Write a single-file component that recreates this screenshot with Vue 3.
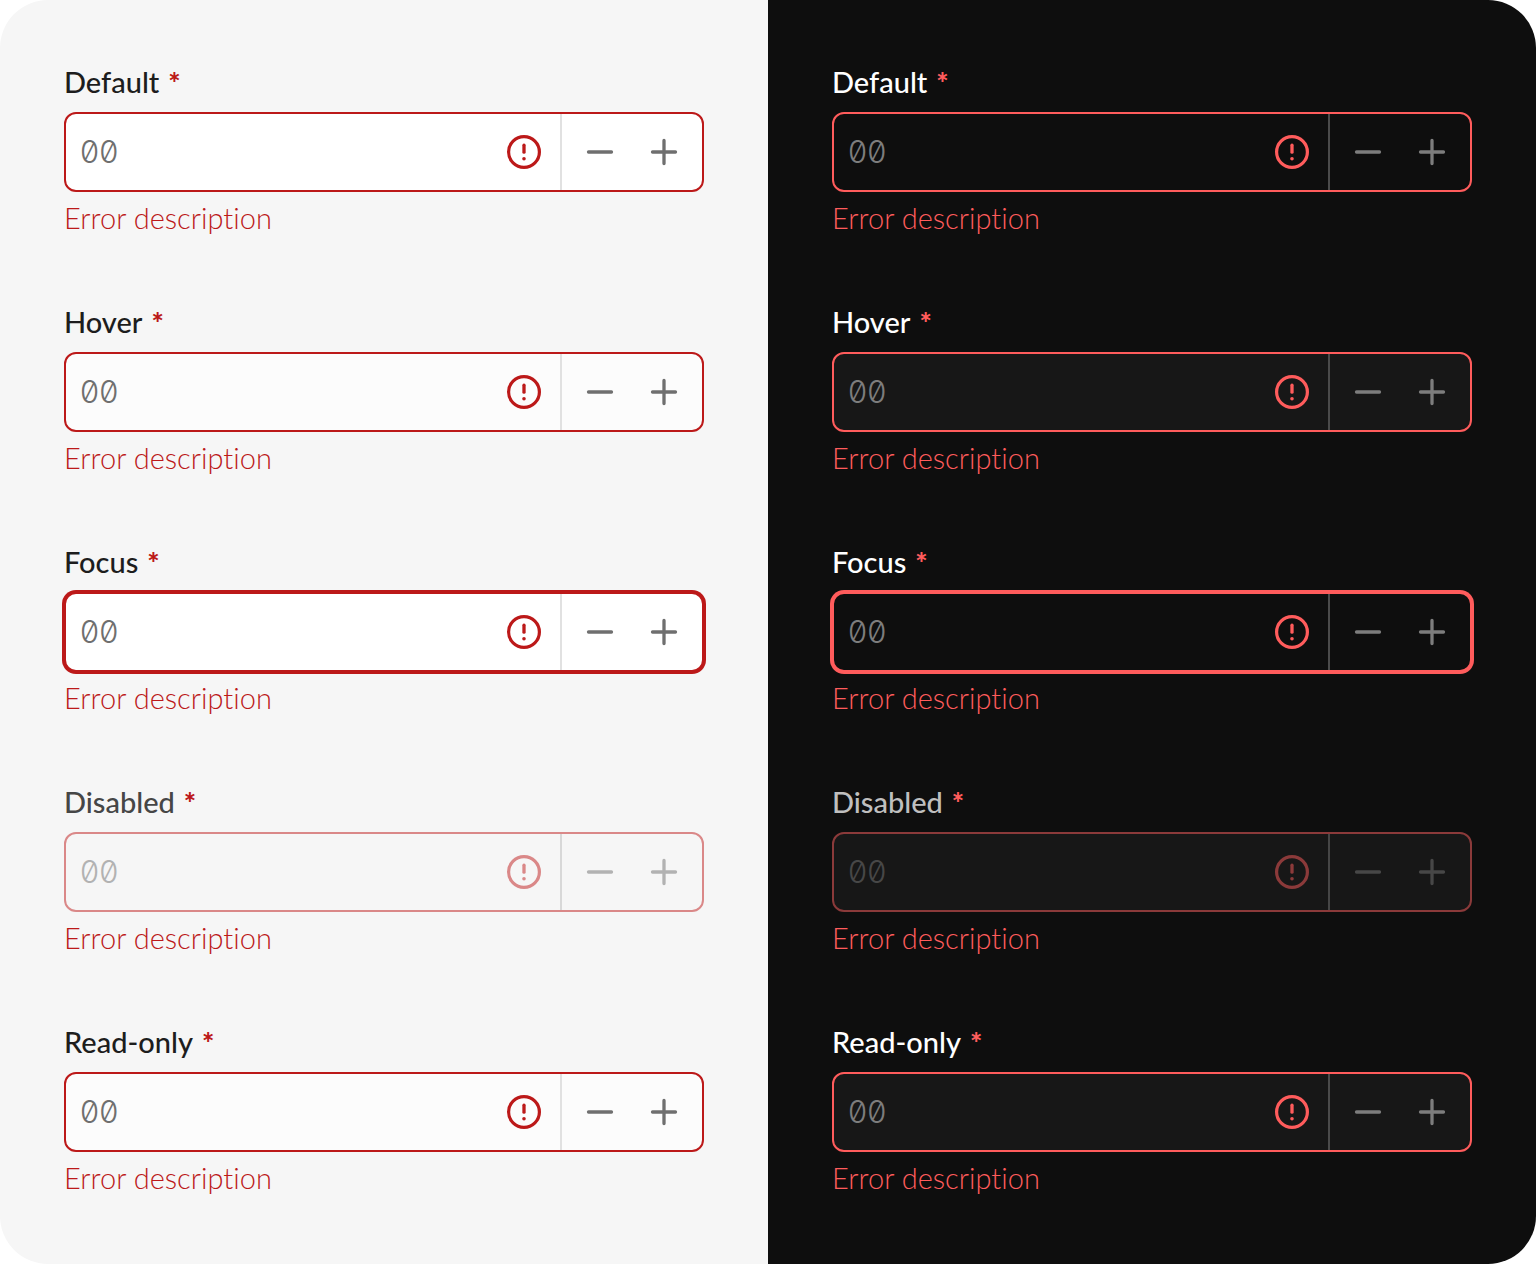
<script setup>
const themes = ['light', 'dark']
const states = [
  { id: 'default', label: 'Default' },
  { id: 'hover', label: 'Hover' },
  { id: 'focus', label: 'Focus' },
  { id: 'disabled', label: 'Disabled' },
  { id: 'readonly', label: 'Read-only' },
]
</script>

<template>
  <main class="board">
    <section v-for="theme in themes" :key="theme" class="panel" :class="theme">
      <div v-for="state in states" :key="state.id" class="field" :class="state.id">
        <label class="label" :for="`${theme}-${state.id}`">
          {{ state.label }}<span class="required">*</span>
        </label>
        <div class="control">
          <input
            :id="`${theme}-${state.id}`"
            class="input"
            type="text"
            inputmode="numeric"
            placeholder="00"
            required
            aria-invalid="true"
            :aria-describedby="`${theme}-${state.id}-error`"
            :disabled="state.id === 'disabled'"
            :readonly="state.id === 'readonly'"
          />
          <svg class="alert" viewBox="0 0 40 40" aria-hidden="true">
            <circle cx="20" cy="20" r="15.4" fill="none" stroke="currentColor" stroke-width="3.2" />
            <path d="M20 13.2v7" fill="none" stroke="currentColor" stroke-width="3.3" stroke-linecap="round" />
            <circle cx="20" cy="26.7" r="1.8" fill="currentColor" />
          </svg>
          <div class="steppers">
            <button class="step" type="button" aria-label="Decrease" :disabled="state.id === 'disabled'">
              <svg viewBox="0 0 32 32" aria-hidden="true">
                <path d="M4.5 16h23" />
              </svg>
            </button>
            <button class="step" type="button" aria-label="Increase" :disabled="state.id === 'disabled'">
              <svg viewBox="0 0 32 32" aria-hidden="true">
                <path d="M4.5 16h23M16 4.5v23" />
              </svg>
            </button>
          </div>
        </div>
        <p :id="`${theme}-${state.id}-error`" class="error">Error description</p>
      </div>
    </section>
  </main>
</template>

<style>
body {
  margin: 0;
  background: #ffffff;
}
</style>

<style scoped>
.board {
  display: grid;
  grid-template-columns: repeat(2, minmax(0, 1fr));
  border-radius: 48px;
  overflow: hidden;
  font-family: Lato, "Liberation Sans", sans-serif;
  font-size: 29px;
  font-variant-ligatures: none;
}

.panel {
  display: flex;
  flex-direction: column;
  gap: 64px;
  padding: 64px;
  background: var(--page);
}

.light {
  --page: #f6f6f6;
  --text: #1d1d1d;
  --text-disabled: #464646;
  --negative: #bc1919;
  --negative-disabled: #da8888;
  --surface: #ffffff;
  --surface-hover: #fcfcfc;
  --surface-disabled: #f6f6f6;
  --muted: #6f6f6f;
  --muted-disabled: #b2b2b2;
  --divider: #e1e1e1;
  --divider-disabled: #d8d8d8;
}

.dark {
  --page: #0e0e0e;
  --text: #ffffff;
  --text-disabled: #bfbfbf;
  --negative: #ff5c5c;
  --negative-disabled: #8b3a3a;
  --surface: #0e0e0e;
  --surface-hover: #171717;
  --surface-disabled: #171717;
  --muted: #7d7d7d;
  --muted-disabled: #474747;
  --divider: #4b4b4b;
  --divider-disabled: #464646;
}

.label {
  display: block;
  margin-bottom: 12px;
  line-height: 36px;
  font-weight: 500;
  color: var(--text);
}

.required {
  margin-left: 9px;
  font-weight: 900;
  color: var(--negative);
}

.control {
  --edge: var(--negative);
  --content: var(--muted);
  --rule: var(--divider);
  display: flex;
  align-items: center;
  box-sizing: border-box;
  height: 80px;
  border: 2px solid var(--edge);
  border-radius: 12px;
  background: var(--surface);
  color: var(--content);
}

.hover .control,
.readonly .control {
  background: var(--surface-hover);
}

.focus .control {
  box-shadow: 0 0 0 2px var(--edge);
}

.disabled .label {
  color: var(--text-disabled);
}

.disabled .control {
  --edge: var(--negative-disabled);
  --content: var(--muted-disabled);
  --rule: var(--divider-disabled);
  background: var(--surface-disabled);
}

.input {
  flex: 1;
  min-width: 0;
  height: 100%;
  padding: 0 14px 2px;
  box-sizing: border-box;
  border: 0;
  outline: 0;
  background: transparent;
  color: inherit;
  font-family: Inter, "Liberation Sans", sans-serif;
  font-size: 31px;
  font-weight: 300;
  font-feature-settings: "zero";
}

.input::placeholder {
  color: var(--content);
  opacity: 1;
}

.alert {
  flex: none;
  width: 40px;
  height: 40px;
  margin-right: 16px;
  color: var(--edge);
}

.steppers {
  display: flex;
  align-self: stretch;
  padding: 0 6px;
  border-left: 2px solid var(--rule);
}

.step {
  display: flex;
  align-items: center;
  justify-content: center;
  width: 64px;
  padding: 0;
  border: 0;
  background: transparent;
  color: inherit;
}

.step svg {
  width: 32px;
  height: 32px;
  fill: none;
  stroke: currentColor;
  stroke-width: 3.3;
  stroke-linecap: round;
}

.error {
  margin: 8px 0 0;
  padding-bottom: 4px;
  line-height: 36px;
  font-weight: 300;
  color: var(--negative);
}
</style>
